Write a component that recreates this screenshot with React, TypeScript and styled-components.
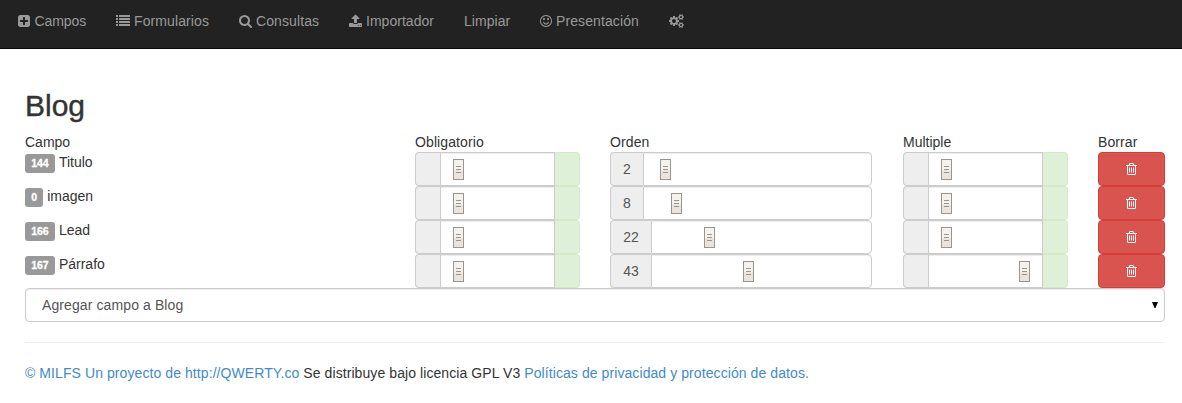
import React from "react";
import styled, { createGlobalStyle } from "styled-components";

const GlobalStyle = createGlobalStyle`
  *, *::before, *::after { box-sizing: border-box; }
  body {
    margin: 0;
    background: #fff;
    color: #333;
    font-family: "Liberation Sans", Arial, sans-serif;
    font-size: 14px;
    line-height: 20px;
  }
`;

const Navbar = styled.nav`
  display: flex;
  height: 49px;
  padding: 0 3px;
  background: #222;
  border-bottom: 1px solid #080808;
`;

const NavLink = styled.a<{ $width: number; $spacing?: number }>`
  display: flex;
  align-items: center;
  flex: none;
  width: ${(p) => p.$width}px;
  height: 42px;
  padding-left: 15px;
  color: #999;
  white-space: pre;
  letter-spacing: ${(p) => p.$spacing ?? 0}px;
`;

const Glyph = styled.svg<{ $w?: number }>`
  flex: none;
  width: ${(p) => p.$w ?? 14}px;
  height: 14px;
  fill: currentColor;
`;

const NavText = styled.span<{ $gap: number }>`
  margin-left: ${(p) => p.$gap}px;
`;

const Main = styled.main`
  width: 1140px;
  margin: 40px 0 0 25px;
`;

const Title = styled.h2`
  margin: 0 0 10px;
  font-size: 30px;
  font-weight: 400;
  line-height: 33px;
  -webkit-text-stroke: 0.4px #333;
`;

const Row = styled.div<{ $height: number }>`
  display: grid;
  grid-template-columns: 360px 165px 263px 165px 67px;
  column-gap: 30px;
  height: ${(p) => p.$height}px;
`;

const FieldName = styled.div`
  display: flex;
  align-items: flex-start;
`;

const Label = styled.span`
  height: 19px;
  margin: 2px 4px 0 0;
  padding: 0 6.2px;
  border-radius: 3px;
  background: #999;
  color: #fff;
  font-size: 10.5px;
  font-weight: 700;
  line-height: 19px;
  -webkit-text-stroke: 0.3px #fff;
`;

const Group = styled.div`
  display: flex;
  max-width: 262px;
  height: 34px;
`;

const Addon = styled.span<{ $width: number }>`
  flex: none;
  width: ${(p) => p.$width}px;
  border: 1px solid #ccc;
  border-right: 0;
  border-radius: 4px 0 0 4px;
  background: #eee;
  color: #555;
  line-height: 32px;
  text-align: center;
`;

const Track = styled.div<{ $last?: boolean }>`
  flex: 1;
  padding-top: 6px;
  border: 1px solid #ccc;
  border-radius: ${(p) => (p.$last ? "0 4px 4px 0" : "0")};
  box-shadow: inset 0 1px 1px rgba(0, 0, 0, 0.075);
`;

const Thumb = styled.div<{ $offset: number }>`
  display: flex;
  flex-direction: column;
  justify-content: center;
  align-items: center;
  gap: 2px;
  width: 11px;
  height: 21px;
  margin-left: ${(p) => p.$offset}px;
  border: 1px solid #9a948c;
  background: linear-gradient(#f4f2ee 0 50%, #e9e4df 60%);
`;

const Grip = styled.i`
  width: 5px;
  height: 1px;
  background: #9a948c;
`;

const Success = styled.span`
  flex: none;
  width: 25px;
  border: 1px solid #d6e9c6;
  border-left: 0;
  border-radius: 0 4px 4px 0;
  background: #dff0d8;
`;

const DeleteButton = styled.button`
  display: flex;
  align-items: center;
  justify-content: center;
  height: 34px;
  padding: 0;
  border: 1px solid #d43f3a;
  border-radius: 4px;
  background: #d9534f;
  color: #fff;
`;

const Select = styled.div`
  display: flex;
  align-items: center;
  justify-content: space-between;
  height: 34px;
  padding: 0 6px 0 16px;
  border: 1px solid #ccc;
  border-radius: 4px;
  box-shadow: inset 0 1px 1px rgba(0, 0, 0, 0.075);
  color: #555;
  letter-spacing: 0.1px;
`;

const Rule = styled.hr`
  height: 1px;
  margin: 20px 0;
  border: 0;
  background: #eee;
`;

const Footer = styled.footer`
  white-space: nowrap;
  letter-spacing: 0.08px;
`;

const Link = styled.a`
  color: #428bca;
`;

const Heading = styled.span<{ $spacing?: number }>`
  letter-spacing: ${(p) => p.$spacing ?? 0}px;
`;

const icons = {
  plus: "M1408 960v-128q0-26-19-45t-45-19h-320v-320q0-26-19-45t-45-19h-128q-26 0-45 19t-19 45v320h-320q-26 0-45 19t-19 45v128q0 26 19 45t45 19h320v320q0 26 19 45t45 19h128q26 0 45-19t19-45v-320h320q26 0 45-19t19-45zm256-544v960q0 119-84.5 203.5t-203.5 84.5h-960q-119 0-203.5-84.5t-84.5-203.5v-960q0-119 84.5-203.5t203.5-84.5h960q119 0 203.5 84.5t84.5 203.5z",
  list: "M0 256h256v256h-256zM0 640h256v256h-256zM0 1024h256v256h-256zM0 1408h256v256h-256zM384 256h1408v256h-1408zM384 640h1408v256h-1408zM384 1024h1408v256h-1408zM384 1408h1408v256h-1408z",
  search:
    "M1216 832q0-185-131.5-316.5t-316.5-131.5-316.5 131.5-131.5 316.5 131.5 316.5 316.5 131.5 316.5-131.5 131.5-316.5zm512 832q0 52-38 90t-90 38q-54 0-90-38l-343-342q-179 124-399 124-143 0-273.5-55.5t-225-150-150-225-55.5-273.5 55.5-273.5 150-225 225-150 273.5-55.5 273.5 55.5 225 150 150 225 55.5 273.5q0 220-124 399l343 343q37 37 37 90z",
  upload:
    "M1344 1472q0-26-19-45t-45-19-45 19-19 45 19 45 45 19 45-19 19-45zm256 0q0-26-19-45t-45-19-45 19-19 45 19 45 45 19 45-19 19-45zm128-224v320q0 40-28 68t-68 28h-1472q-40 0-68-28t-28-68v-320q0-40 28-68t68-28h427q21 56 70.5 92t110.5 36h256q61 0 110.5-36t70.5-92h427q40 0 68 28t28 68zm-325-648q-17 40-59 40h-256v448q0 26-19 45t-45 19h-256q-26 0-45-19t-19-45v-448h-256q-42 0-59-40-17-39 14-69l448-448q18-19 45-19t45 19l448 448q31 30 14 69z",
  smile:
    "M1262 1075q-37 121-138 195t-228 74-228-74-138-195q-8-25 4-48.5t38-31.5q25-8 48.5 4t31.5 38q25 80 92.5 129.5t151.5 49.5 151.5-49.5 92.5-129.5q8-26 32-38t49-4 37 31.5 4 48.5zm-494-435q0 53-37.5 90.5t-90.5 37.5-90.5-37.5-37.5-90.5 37.5-90.5 90.5-37.5 90.5 37.5 37.5 90.5zm512 0q0 53-37.5 90.5t-90.5 37.5-90.5-37.5-37.5-90.5 37.5-90.5 90.5-37.5 90.5 37.5 37.5 90.5zm256 256q0-130-51-248.5t-136.5-204-204-136.5-248.5-51-248.5 51-204 136.5-136.5 204-51 248.5 51 248.5 136.5 204 204 136.5 248.5 51 248.5-51 204-136.5 136.5-204 51-248.5zm128 0q0 209-103 385.5t-279.5 279.5-385.5 103-385.5-103-279.5-279.5-103-385.5 103-385.5 279.5-279.5 385.5-103 385.5 103 279.5 279.5 103 385.5z",
  cogs: "M896 896q0-106-75-181t-181-75-181 75-75 181 75 181 181 75 181-75 75-181zm768 512q0-52-38-90t-90-38-90 38-38 90q0 53 37.5 90.5t90.5 37.5 90.5-37.5 37.5-90.5zm0-1024q0-52-38-90t-90-38-90 38-38 90q0 53 37.5 90.5t90.5 37.5 90.5-37.5 37.5-90.5zm-384 421v185q0 10-7 19.5t-16 10.5l-155 24q-11 35-32 76 34 48 90 115 7 11 7 20 0 12-7 19-23 30-82.5 89.5t-78.5 59.5q-11 0-21-7l-115-90q-37 19-77 31-11 108-23 155-7 24-30 24h-186q-11 0-20-7.5t-10-17.5l-23-153q-34-10-75-31l-118 89q-7 7-20 7-11 0-21-8-144-133-144-160 0-9 7-19 10-14 41-53t47-61q-23-44-35-82l-152-24q-10-1-17-9.5t-7-19.5v-185q0-10 7-19.5t16-10.5l155-24q11-35 32-76-34-48-90-115-7-11-7-20 0-12 7-20 22-30 82-89t79-59q11 0 21 7l115 90q34-18 77-32 11-108 23-154 7-24 30-24h186q11 0 20 7.5t10 17.5l23 153q34 10 75 31l118-89q8-7 20-7 11 0 21 8 144 133 144 160 0 8-7 19-12 16-42 54t-45 60q23 48 34 82l152 23q10 2 17 10.5t7 19.5zm640 533v140q0 16-149 31-12 27-30 52 51 113 51 138 0 4-4 7-122 71-124 71-8 0-46-47t-52-68q-20 2-30 2t-30-2q-14 21-52 68t-46 47q-2 0-124-71-4-3-4-7 0-25 51-138-18-25-30-52-149-15-149-31v-140q0-16 149-31 13-29 30-52-51-113-51-138 0-4 4-7 4-2 35-20t59-34 30-16q8 0 46 46.5t52 67.5q20-2 30-2t30 2q51-71 92-112l6-2q4 0 124 70 4 3 4 7 0 25-51 138 17 23 30 52 149 15 149 31zm0-1024v140q0 16-149 31-12 27-30 52 51 113 51 138 0 4-4 7-122 71-124 71-8 0-46-47t-52-68q-20 2-30 2t-30-2q-14 21-52 68t-46 47q-2 0-124-71-4-3-4-7 0-25 51-138-18-25-30-52-149-15-149-31v-140q0-16 149-31 13-29 30-52-51-113-51-138 0-4 4-7 4-2 35-20t59-34 30-16q8 0 46 46.5t52 67.5q20-2 30-2t30 2q51-71 92-112l6-2q4 0 124 70 4 3 4 7 0 25-51 138 17 23 30 52 149 15 149 31z",
  trash:
    "M704 736v576q0 14-9 23t-23 9h-64q-14 0-23-9t-9-23v-576q0-14 9-23t23-9h64q14 0 23 9t9 23zm256 0v576q0 14-9 23t-23 9h-64q-14 0-23-9t-9-23v-576q0-14 9-23t23-9h64q14 0 23 9t9 23zm256 0v576q0 14-9 23t-23 9h-64q-14 0-23-9t-9-23v-576q0-14 9-23t23-9h64q14 0 23 9t9 23zm128 724v-948h-896v948q0 22 7 40.5t14.5 27 10.5 8.5h832q3 0 10.5-8.5t14.5-27 7-40.5zm-672-1076h448l-48-117q-7-9-17-11h-317q-10 2-17 11zm928 32v64q0 14-9 23t-23 9h-96v948q0 83-47 143.5t-113 60.5h-832q-66 0-113-58.5t-47-141.5v-952h-96q-14 0-23-9t-9-23v-64q0-14 9-23t23-9h309l70-167q15-37 54-63t79-26h320q40 0 79 26t54 63l70 167h309q14 0 23 9t9 23z",
};

const nav = [
  { icon: icons.plus, box: "128 0 1536 1792", w: 12, text: "Campos", width: 98, gap: 4.5, spacing: -0.1 },
  { icon: icons.list, box: "0 128 1792 1792", w: 14, text: "Formularios", width: 123, gap: 4, spacing: 0.1 },
  { icon: icons.search, box: "64 0 1664 1792", w: 13, text: "Consultas", width: 110, gap: 4, spacing: 0.1 },
  { icon: icons.upload, box: "64 0 1664 1792", w: 13, text: "Importador", width: 115, gap: 4, spacing: 0.03 },
  { text: "Limpiar", width: 76, gap: 0, spacing: 0.05 },
  { icon: icons.smile, box: "128 0 1536 1792", w: 12, text: "Presentación", width: 129, gap: 4, spacing: 0.1 },
];

const rows = [
  { id: 144, name: "Titulo", order: 2, orderAt: 16, multipleAt: 12 },
  { id: 0, name: "imagen", order: 8, orderAt: 27, multipleAt: 12 },
  { id: 166, name: "Lead", order: 22, orderAt: 52, multipleAt: 12 },
  { id: 167, name: "Párrafo", order: 43, orderAt: 91, multipleAt: 90 },
];

const SliderThumb = ({ at }: { at: number }) => (
  <Thumb $offset={at}>
    <Grip />
    <Grip />
    <Grip />
  </Thumb>
);

const Toggle = ({ at }: { at: number }) => (
  <Group>
    <Addon $width={25} />
    <Track>
      <SliderThumb at={at} />
    </Track>
    <Success />
  </Group>
);

export default function App() {
  return (
    <>
      <GlobalStyle />
      <Navbar>
        {nav.map((n) => (
          <NavLink key={n.text} $width={n.width} $spacing={n.spacing}>
            {n.icon && (
              <Glyph viewBox={n.box} $w={n.w}>
                <path d={n.icon} />
              </Glyph>
            )}
            <NavText $gap={n.gap}>{n.text}</NavText>
          </NavLink>
        ))}
        <NavLink $width={46}>
          <Glyph viewBox="0 0 1920 1792" $w={15}>
            <path d={icons.cogs} />
          </Glyph>
        </NavLink>
      </Navbar>
      <Main>
        <Title>Blog</Title>
        <Row $height={20}>
          <Heading>Campo</Heading>
          <Heading $spacing={0.1}>Obligatorio</Heading>
          <Heading $spacing={0.1}>Orden</Heading>
          <Heading>Multiple</Heading>
          <Heading $spacing={0.1}>Borrar</Heading>
        </Row>
        {rows.map((r) => (
          <Row key={r.id} $height={34}>
            <FieldName>
              <Label>{r.id}</Label>
              {r.name}
            </FieldName>
            <Toggle at={12} />
            <Group>
              <Addon $width={r.order > 9 ? 41 : 33}>{r.order}</Addon>
              <Track $last>
                <SliderThumb at={r.orderAt} />
              </Track>
            </Group>
            <Toggle at={r.multipleAt} />
            <DeleteButton aria-label="Borrar">
              <Glyph viewBox="192 0 1408 1792" $w={11}>
                <path d={icons.trash} />
              </Glyph>
            </DeleteButton>
          </Row>
        ))}
        <Select>
          <span>Agregar campo a Blog</span>
          <svg width="6" height="6" viewBox="0 0 6 6">
            <path d="M0 0h6L3.5 6h-1z" fill="#000" />
          </svg>
        </Select>
        <Rule />
        <Footer>
          <Link>© MILFS Un proyecto de http://QWERTY.co</Link> Se distribuye bajo licencia GPL V3{" "}
          <Link>Políticas de privacidad y protección de datos.</Link>
        </Footer>
      </Main>
    </>
  );
}
